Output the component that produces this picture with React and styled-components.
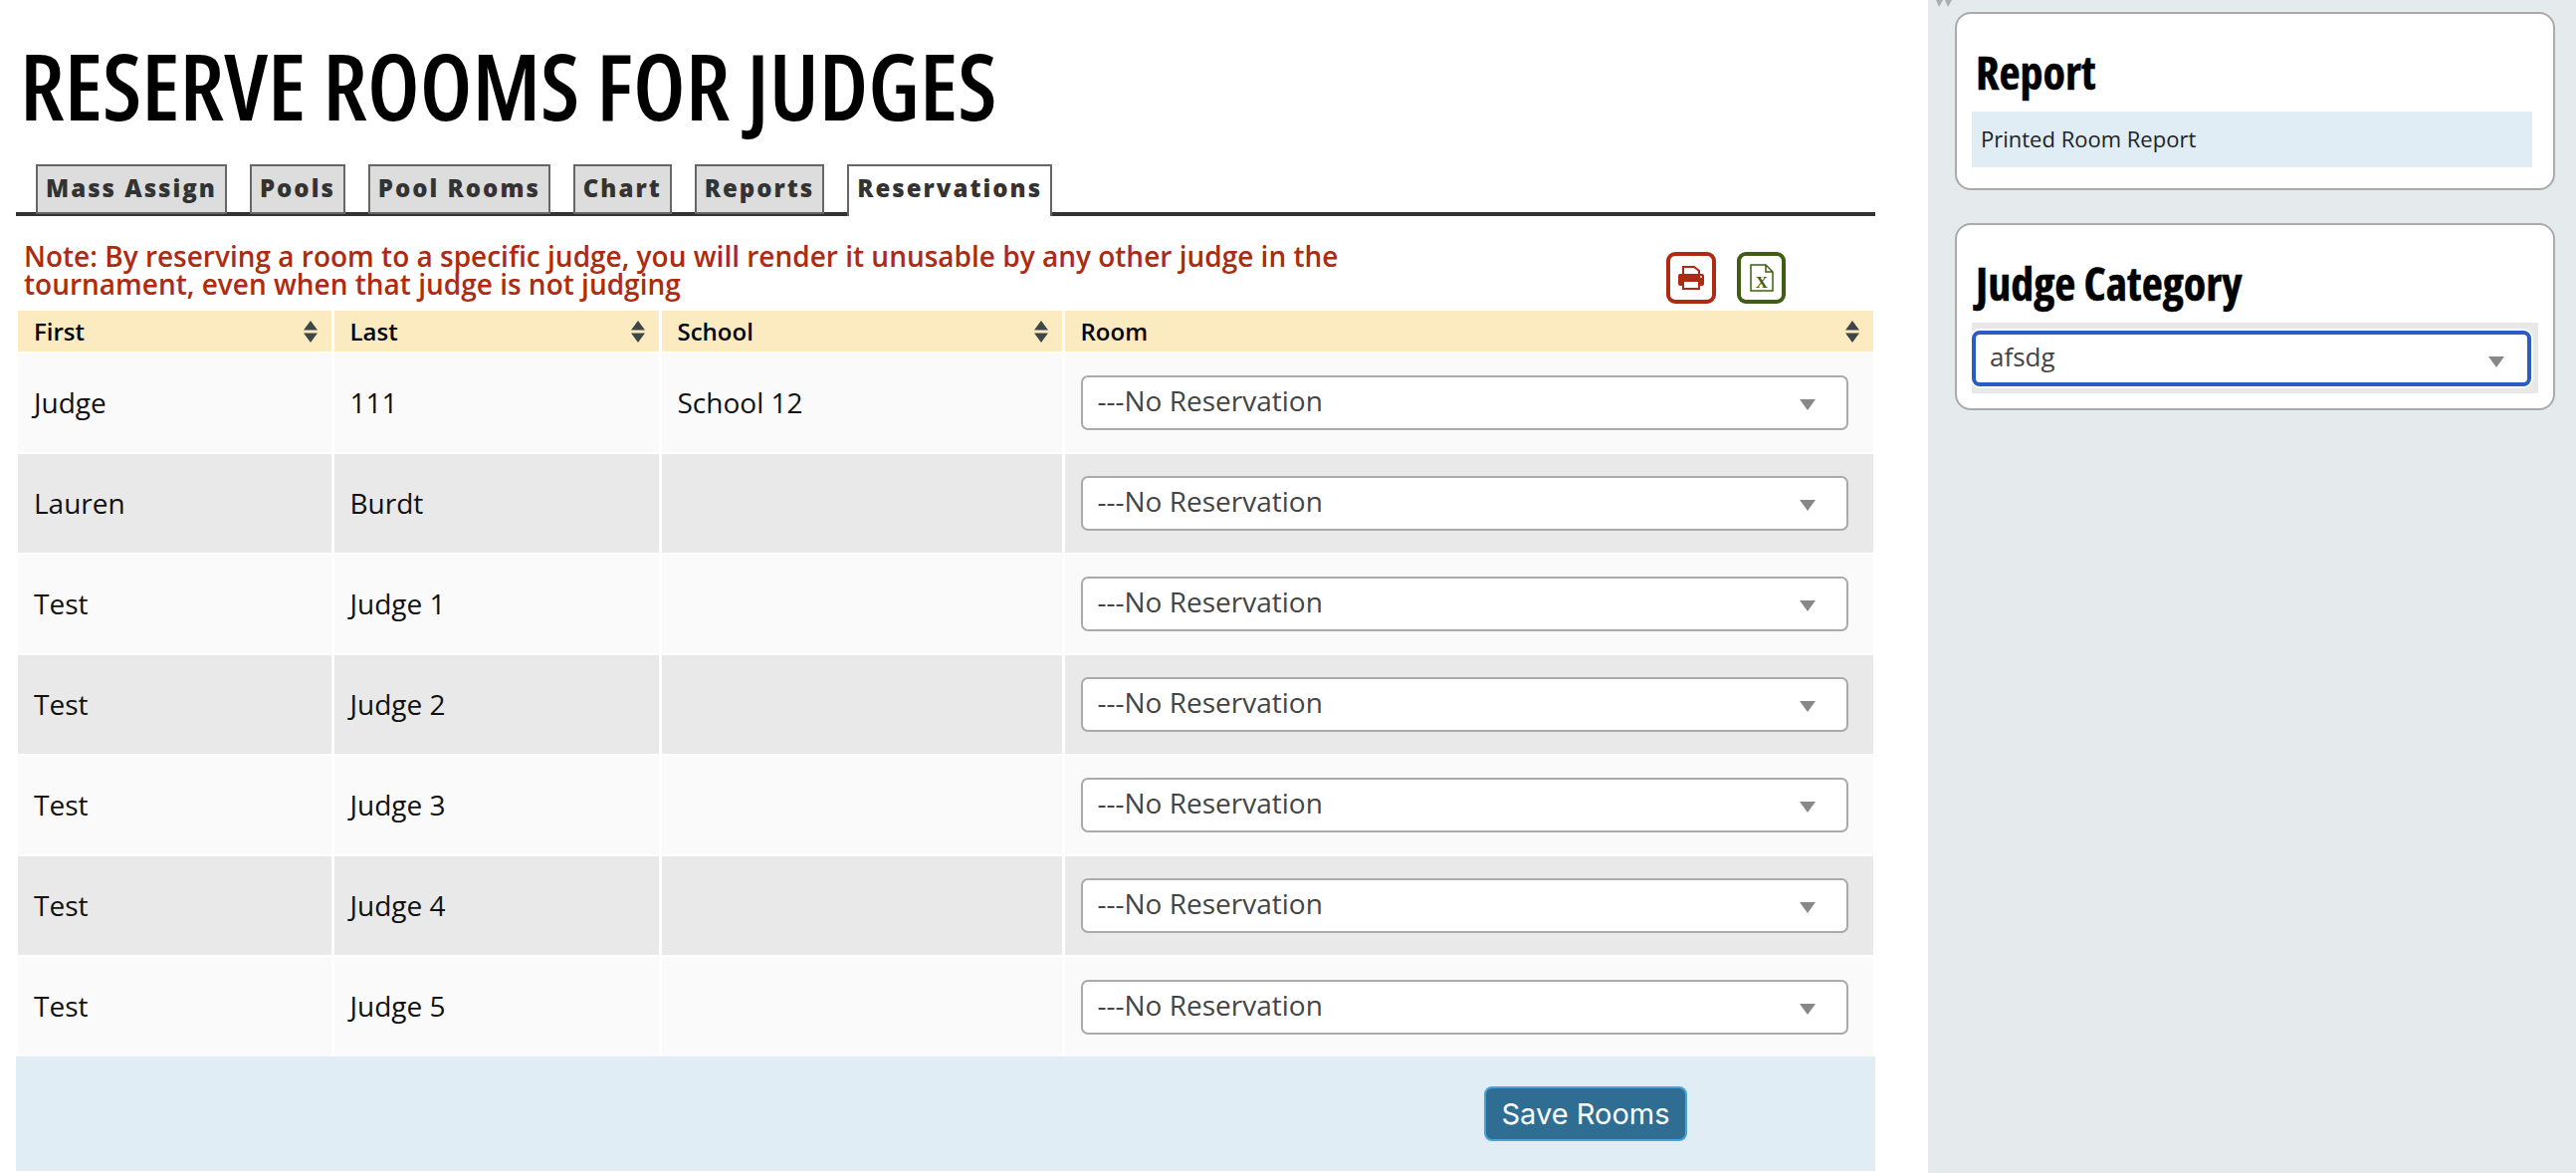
import React from "react";
import styled, { createGlobalStyle } from "styled-components";

const judges = [
  { first: "Judge", last: "111", school: "School 12" },
  { first: "Lauren", last: "Burdt", school: "" },
  { first: "Test", last: "Judge 1", school: "" },
  { first: "Test", last: "Judge 2", school: "" },
  { first: "Test", last: "Judge 3", school: "" },
  { first: "Test", last: "Judge 4", school: "" },
  { first: "Test", last: "Judge 5", school: "" },
];

const tabs = ["Mass Assign", "Pools", "Pool Rooms", "Chart", "Reports", "Reservations"];
const columns = ["First", "Last", "School", "Room"];

const App = () => {
  return (
    <Page>
      <GlobalStyle />
      <Main>
        <Title>RESERVE ROOMS FOR JUDGES</Title>
        <TabBar>
          {tabs.map((tab) => (
            <Tab key={tab} $active={tab === "Reservations"}>{tab}</Tab>
          ))}
        </TabBar>
        <NoteRow>
          <Note>
            Note: By reserving a room to a specific judge, you will render it unusable by any other judge in the
            tournament, even when that judge is not judging
          </Note>
          <IconButtons>
            <IconButton $color='#ac2b11' $width='50px'>
              <svg width='26' height='24' viewBox='0 0 26 24'>
                <path d='M5 1h11l5 4v7H5z' fill='#fff' stroke='currentColor' strokeWidth='2' />
                <rect x='0' y='8' width='26' height='12' rx='2' fill='currentColor' />
                <rect x='5' y='15' width='16' height='8' fill='#fff' stroke='currentColor' strokeWidth='2' />
                <circle cx='23' cy='11' r='1' fill='#fff' />
              </svg>
            </IconButton>
            <IconButton $color='#3f5d14' $width='49px'>
              <svg width='24' height='28' viewBox='0 0 24 28'>
                <path d='M1 1h15l7 7v19H1z M16 1v7h7' fill='none' stroke='currentColor' strokeWidth='1.5' />
                <text x='12' y='24' textAnchor='middle' fontFamily='Liberation Serif' fontWeight='700' fontSize='17' fill='currentColor'>X</text>
              </svg>
            </IconButton>
          </IconButtons>
        </NoteRow>
        <Table>
          <colgroup>
            <col width='316' />
            <col width='329' />
            <col width='405' />
            <col />
          </colgroup>
          <thead>
            <tr>
              {columns.map((col) => (
                <HeadCell key={col}>
                  <HeadInner>
                    {col}
                    <svg width='16' height='24' viewBox='0 0 16 24'>
                      <path d='M8 1l7 9.5H1z M8 23l-7-9.5h14z' fill='#3f464a' />
                    </svg>
                  </HeadInner>
                </HeadCell>
              ))}
            </tr>
          </thead>
          <tbody>
            {judges.map((judge, i) => (
              <Row key={judge.last} $even={i % 2 === 1}>
                <Cell>{judge.first}</Cell>
                <Cell>{judge.last}</Cell>
                <Cell>{judge.school}</Cell>
                <Cell>
                  <Select>---No Reservation<Arrow /></Select>
                </Cell>
              </Row>
            ))}
          </tbody>
        </Table>
        <Footer>
          <SaveButton>Save Rooms</SaveButton>
        </Footer>
      </Main>
      <Sidebar>
        <Toggle>
          <svg width='16' height='7' viewBox='0 0 16 7'>
            <path d='M0 0h7l-4 7z M9 0h7l-4 7z' fill='#a9b0b5' />
          </svg>
        </Toggle>
        <Card>
          <CardTitle>Report</CardTitle>
          <ReportLink>Printed Room Report</ReportLink>
        </Card>
        <Card $second>
          <CardTitle>Judge Category</CardTitle>
          <CategoryRow>
            <CategorySelect>afsdg<Arrow $right='23px' /></CategorySelect>
          </CategoryRow>
        </Card>
      </Sidebar>
    </Page>
  );
};

const GlobalStyle = createGlobalStyle`
  html, body {
    margin: 0;
    padding: 0;
    background: #fff;
    font-family: "Open Sans", sans-serif;
  }
`;

const Page = styled.div`
  display: flex;
  height: 1178px;
  overflow: hidden;
`;

const Main = styled.main`
  box-sizing: border-box;
  width: 1937px;
  padding: 0 53px 0 16px;
`;

const Title = styled.h1`
  color: #000;
  font-size: 92.6px;
  font-stretch: 75%;
  font-weight: 600;
  line-height: 100px;
  margin: 35px 0 0 4px;
  white-space: nowrap;
`;

const TabBar = styled.div`
  border-bottom: 4px solid #333;
  display: flex;
  gap: 23px;
  height: 48px;
  margin-top: 30px;
  padding-left: 20px;
`;

const Tab = styled.div`
  background: ${(p) => (p.$active ? "#fff" : "#ddd")};
  border: 2px solid #666;
  border-bottom: ${(p) => (p.$active ? "none" : "2px solid #666")};
  box-sizing: border-box;
  color: #333;
  font-size: 24px;
  font-weight: 800;
  height: ${(p) => (p.$active ? "52px" : "50px")};
  letter-spacing: 2px;
  line-height: 44px;
  padding: 0 8px;
  white-space: nowrap;
`;

const NoteRow = styled.div`
  display: flex;
  height: 95px;
  padding-left: 8px;
`;

const Note = styled.div`
  color: #ac2b11;
  font-size: 28px;
  font-weight: 600;
  line-height: 28px;
  padding-top: 26px;
  width: 1420px;
`;

const IconButtons = styled.div`
  display: flex;
  gap: 21px;
  margin-left: 230px;
  padding-top: 36px;
`;

const IconButton = styled.div`
  align-items: center;
  border: 4px solid ${(p) => p.$color};
  border-radius: 9px;
  box-sizing: border-box;
  color: ${(p) => p.$color};
  display: flex;
  height: 52px;
  justify-content: center;
  width: ${(p) => p.$width};
`;

const Table = styled.table`
  border-collapse: collapse;
  margin-left: 2px;
  table-layout: fixed;
  width: 1864px;
`;

const HeadCell = styled.th`
  background: #fcebc0;
  border-right: 3px solid #fff;
  box-sizing: border-box;
  color: #000;
  font-size: 24px;
  font-weight: 600;
  height: 42px;
  padding: 0 13px 0 16px;
  text-align: left;

  &:last-child {
    border-right: none;
  }
`;

const HeadInner = styled.div`
  align-items: center;
  display: flex;
  justify-content: space-between;
`;

const Row = styled.tr`
  background: ${(p) => (p.$even ? "#e9e9e9" : "#fafafa")};
  border-top: 2px solid #fff;
`;

const Cell = styled.td`
  border-right: 3px solid #fff;
  box-sizing: border-box;
  color: #111;
  font-size: 28px;
  height: 101px;
  padding: 0 16px 2px;

  &:last-child {
    border-right: none;
    padding-bottom: 0;
  }
`;

const Select = styled.div`
  background: #fff;
  border: 2px solid #aaa;
  border-radius: 7px;
  box-sizing: border-box;
  color: #444;
  height: 55px;
  line-height: 46px;
  padding-left: 15px;
  position: relative;
  width: 771px;
`;

const Arrow = styled.span`
  border-left: 8px solid transparent;
  border-right: 8px solid transparent;
  border-top: 11px solid #888;
  position: absolute;
  right: ${(p) => p.$right || "31px"};
  top: 22px;
`;

const Footer = styled.div`
  align-items: center;
  background: #e0edf5;
  display: flex;
  height: 115px;
  padding-left: 1475px;
`;

const SaveButton = styled.button`
  background: #2f6e92;
  border: 2px solid #4aa3d8;
  border-radius: 8px;
  color: #fff;
  font-family: "Inter", sans-serif;
  font-size: 29px;
  height: 55px;
  padding: 0;
  width: 204px;
`;

const Sidebar = styled.aside`
  background: #e5eaed;
  box-sizing: border-box;
  flex: 1;
  padding: 12px 21px 0 27px;
  position: relative;
`;

const Toggle = styled.div`
  left: 8px;
  line-height: 0;
  position: absolute;
  top: 0;
`;

const Card = styled.section`
  background: #fff;
  border: 2px solid #aaa;
  border-radius: 16px;
  box-sizing: border-box;
  height: ${(p) => (p.$second ? "188px" : "179px")};
  margin-top: ${(p) => (p.$second ? "33px" : "0")};
  padding: 0 15px;
`;

const CardTitle = styled.h4`
  -webkit-text-stroke: 0.5px #000;
  color: #000;
  font-size: 46px;
  font-stretch: 75%;
  font-weight: 700;
  height: 70px;
  line-height: 60px;
  margin: 0;
  padding: 28px 0 0 4px;
`;

const ReportLink = styled.div`
  background: #e0edf5;
  color: #222;
  font-size: 22px;
  height: 56px;
  line-height: 54px;
  margin-right: 6px;
  padding-left: 9px;
`;

const CategoryRow = styled.div`
  background: #e8e8e8;
  box-sizing: border-box;
  height: 71px;
  padding-top: 8px;
`;

const CategorySelect = styled.div`
  background: #fff;
  border: 4px solid #2a5cc4;
  border-radius: 8px;
  box-shadow: 0 0 0 2px #fff;
  box-sizing: border-box;
  color: #444;
  font-size: 26px;
  height: 56px;
  line-height: 44px;
  padding-left: 14px;
  position: relative;
  width: 562px;
`;

export default App;
